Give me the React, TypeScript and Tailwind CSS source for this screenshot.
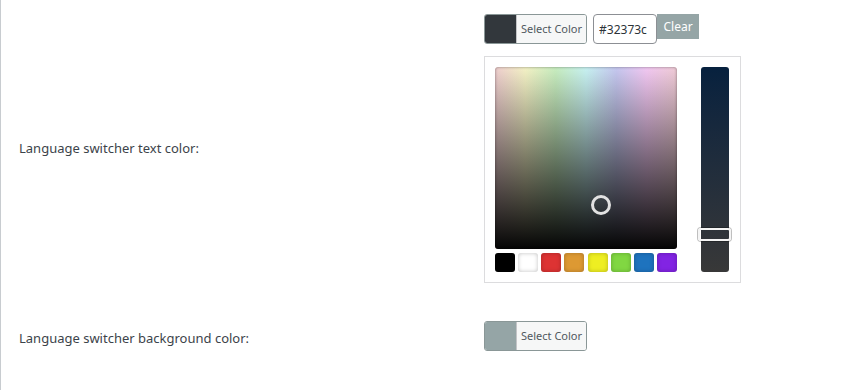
import React from 'react';

const swatches = ['#000000', '#ffffff', '#dd3333', '#dd9933', '#eeee22', '#81d742', '#1e73be', '#8224e3'];

function ColorButton({ color }: { color: string }) {
  return (
    <button className="flex h-[30px] rounded-[3px] border border-[#8a9797] overflow-hidden">
      <span className="w-[31px] h-full" style={{ backgroundColor: color }} />
      <span className="h-full px-[4px] bg-[#f6f7f7] border-l border-[#c3c4c7] text-[11px] leading-[28px] text-[#50575e]">
        Select Color
      </span>
    </button>
  );
}

export default function App() {
  return (
    <div className="h-[390px] bg-white border-l border-[#c8ccd0] font-['Noto_Sans',sans-serif] text-[#3c434a]">
      {/* text colour row */}
      <div className="flex items-center pt-[14px]">
        <div className="w-[483px] pl-[18px] text-[13px]">Language switcher text color:</div>
        <div>
          <div className="flex items-start">
            <ColorButton color="#32373c" />
            <input
              readOnly
              value="#32373c"
              className="ml-[6px] w-[64px] h-[30px] px-[5px] rounded-[4px] border border-[#8c8f94] bg-white text-[12px] text-[#2c3338] outline-none"
            />
            <button className="h-[25px] w-[42px] bg-[#95a5a6] text-white text-[12px]">Clear</button>
          </div>
          <div className="mt-[12px] w-[257px] border border-[#dcdcde] p-[10px] flex gap-[24px]">
            <div className="w-[182px]">
              <div className="relative h-[182px] rounded-[3px] overflow-hidden bg-[linear-gradient(to_right,#f0cfd0,#f4f2c6,#c8eec0,#c8f2f2,#c6c8f0,#f2c8f2,#f0ccd6)]">
                <div className="absolute inset-0 bg-linear-to-b from-transparent to-[#050505]" />
                <div className="absolute inset-0 rounded-[3px] shadow-[inset_0_0_3px_rgba(0,0,0,0.45)]" />
                <div className="absolute left-[96px] top-[128px] w-[20px] h-[20px] rounded-full border-[3px] border-[#e2e2e2]" />
              </div>
              <div className="mt-[4px] flex justify-between">
                {swatches.map((c) => (
                  <span
                    key={c}
                    className="w-[20px] h-[19px] rounded-[3px] shadow-[inset_0_0_4px_rgba(0,0,0,0.25)]"
                    style={{ backgroundColor: c }}
                  />
                ))}
              </div>
            </div>
            <div className="relative w-[28px] h-[205px] rounded-[3px] bg-linear-to-b from-[#07213e] to-[#383838]">
              <div className="absolute left-[-3px] right-[-2px] top-[161px] h-[13px] rounded-[3px] border-2 border-[#f4f4f4] shadow-[0_0_0_1px_rgba(0,0,0,0.25)]" />
            </div>
          </div>
        </div>
      </div>

      {/* background colour row */}
      <div className="flex items-center mt-[38px]">
        <div className="w-[483px] pl-[18px] text-[13px]">Language switcher background color:</div>
        <div className="pb-[6px]">
          <ColorButton color="#95a5a6" />
        </div>
      </div>
    </div>
  );
}
